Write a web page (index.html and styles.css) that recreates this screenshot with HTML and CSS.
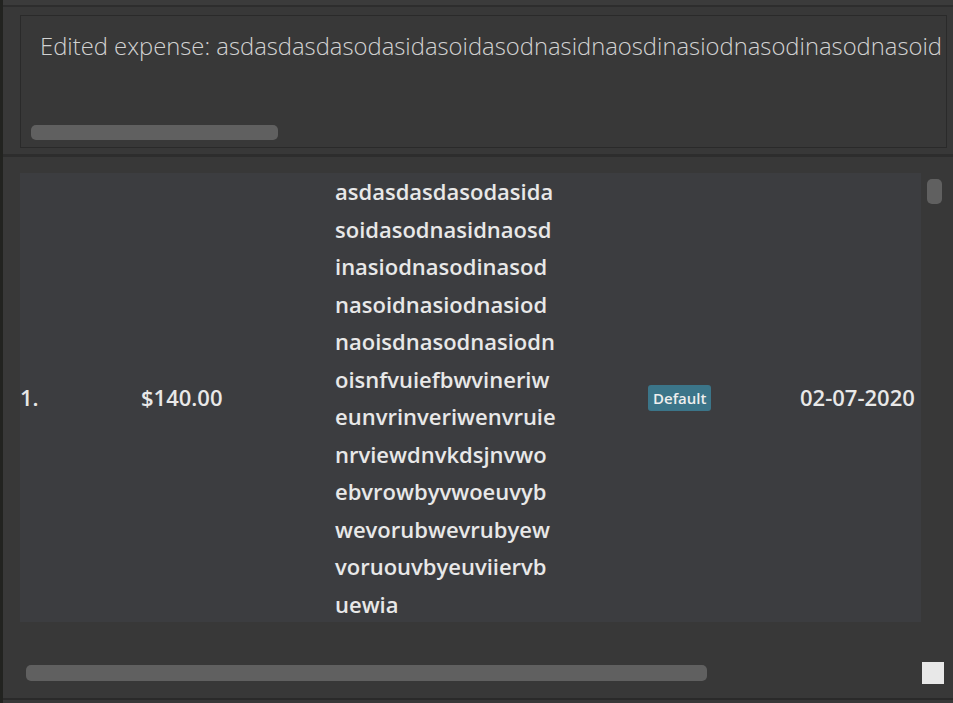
FILE: index.html
```html
<!DOCTYPE html>
<html>
<head>
<meta charset="utf-8">
<link rel="stylesheet" href="styles.css">
</head>
<body>
<div class="app">
  <div class="edge"></div>
  <div class="main">
    <div class="topbar"></div>
    <div class="result-pane">
      <div class="result-box">
        <div class="result-text">Edited expense: asdasdasdasodasidasoidasodnasidnaosdinasiodnasodinasodnasoid</div>
        <div class="hthumb small"></div>
      </div>
    </div>
    <div class="list-pane">
      <div class="list-row">
        <div class="card">
          <div class="cell idx">1.</div>
          <div class="cell price">$140.00</div>
          <div class="cell desc">
            <span>asdasdasdasodasida</span>
            <span>soidasodnasidnaosd</span>
            <span>inasiodnasodinasod</span>
            <span>nasoidnasiodnasiod</span>
            <span>naoisdnasodnasiodn</span>
            <span>oisnfvuiefbwvineriw</span>
            <span>eunvrinveriwenvruie</span>
            <span>nrviewdnvkdsjnvwo</span>
            <span>ebvrowbyvwoeuvyb</span>
            <span>wevorubwevrubyew</span>
            <span>voruouvbyeuviiervb</span>
            <span>uewia</span>
          </div>
          <div class="cell tags"><span class="badge">Default</span></div>
          <div class="cell date">02-07-2020</div>
        </div>
        <div class="vtrack"><div class="vthumb"></div></div>
      </div>
      <div class="hbar-row">
        <div class="hthumb big"></div>
        <div class="corner"></div>
      </div>
    </div>
  </div>
</div>
</body>
</html>
```
FILE: styles.css
```css
html, body {
  margin: 0;
  padding: 0;
  background: #383838;
}
.app {
  display: flex;
  width: 953px;
  height: 703px;
  overflow: hidden;
  background: #383838;
}
.edge {
  width: 3px;
  flex: none;
  background: #222320;
}
.main {
  flex: 1;
  display: flex;
  flex-direction: column;
  min-width: 0;
}
.topbar {
  height: 5px;
  flex: none;
  background: #3b3b3b;
  border-bottom: 2px solid #2d2d2d;
}
.result-pane {
  flex: none;
  padding: 8px 6px 6px 17px;
  border-bottom: 3px solid #2d2d2d;
  background: #383838;
}
.result-box {
  height: 131px;
  border: 1px solid #2a2a2a;
  overflow: hidden;
  display: flex;
  flex-direction: column;
}
.result-text {
  font-family: "Open Sans", "Noto Sans", sans-serif;
  font-weight: 300;
  font-size: 23.8px;
  line-height: 30px;
  color: #d2d2d2;
  white-space: nowrap;
  padding: 15px 0 0 19px;
  flex: 1;
}
.hthumb {
  background: #606060;
  border-radius: 5px;
  height: 15px;
  flex: none;
}
.hthumb.small {
  width: 247px;
  margin: 0 0 7px 10px;
}
.list-pane {
  flex: 1;
  display: flex;
  flex-direction: column;
  padding: 16px 0 0 17px;
  border-bottom: 2px solid #2a2a2a;
  margin-bottom: 3px;
  min-height: 0;
}
.list-row {
  display: flex;
  height: 449px;
  flex: none;
}
.card {
  width: 901px;
  flex: none;
  background: #3c3d40;
  overflow: hidden;
  display: grid;
  grid-template-columns: 121px 194px 313px 152px 200px;
  align-items: center;
  font-family: "Open Sans", "Noto Sans", sans-serif;
  font-weight: 600;
  font-size: 22px;
  line-height: 30px;
  color: #e8e8e8;
}
.idx, .price, .date {
  margin-top: -3px;
}
.cell {
  white-space: nowrap;
}
.desc {
  display: flex;
  flex-direction: column;
  line-height: 37.5px;
}
.tags {
  display: flex;
  align-items: center;
  margin-top: -1px;
}
.badge {
  display: block;
  background: #3b7589;
  color: #eeeeee;
  font-size: 15px;
  font-weight: 600;
  line-height: 26px;
  padding: 0 5px;
  border-radius: 3px;
}
.vtrack {
  flex: 1;
  padding: 6px 0 0 6px;
}
.vthumb {
  width: 15px;
  height: 25px;
  background: #606060;
  border-radius: 5px;
}
.hbar-row {
  display: flex;
  align-items: center;
  margin-top: 40px;
  height: 22px;
}
.hthumb.big {
  width: 681px;
  height: 16px;
  margin-left: 6px;
}
.corner {
  width: 22px;
  height: 22px;
  background: #e8e8e8;
  margin-left: 215px;
}
```
